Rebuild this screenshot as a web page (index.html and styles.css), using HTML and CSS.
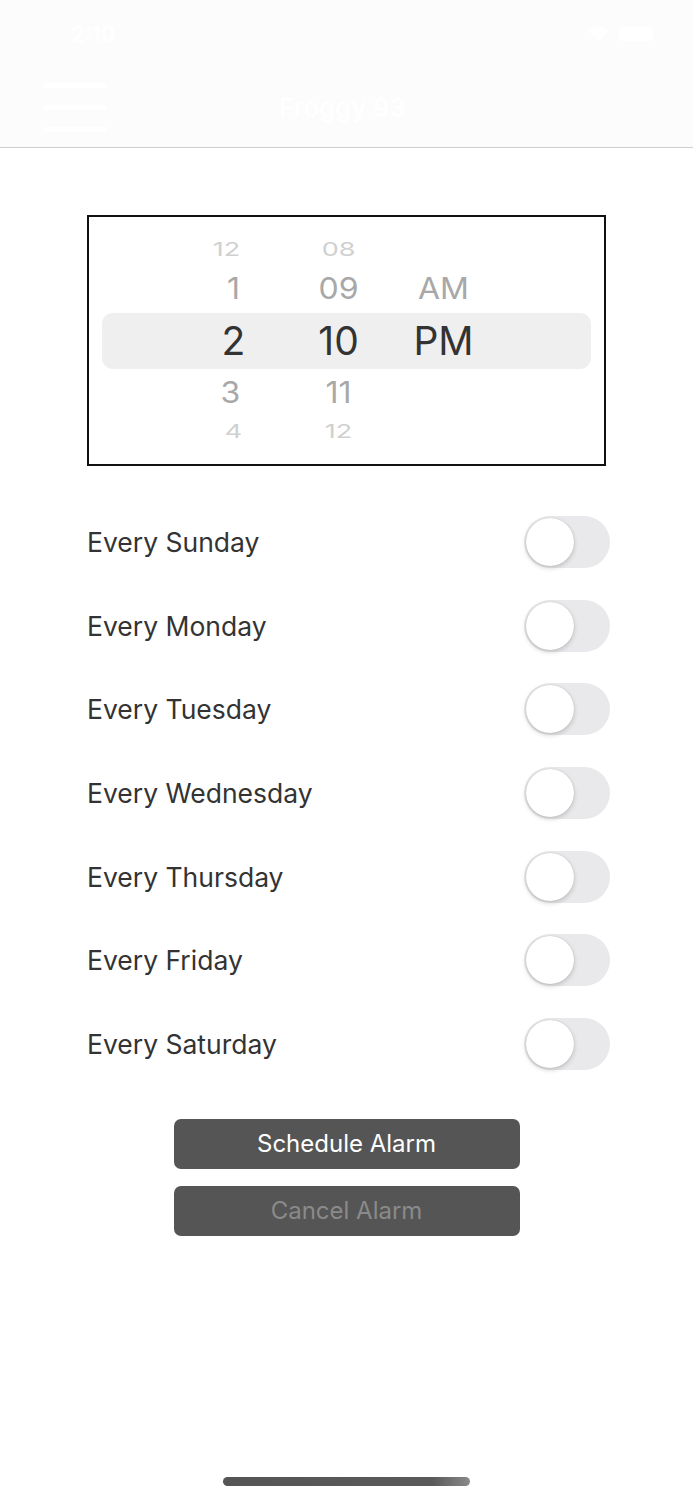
FILE: index.html
```html
<!DOCTYPE html>
<html lang="en">
<head>
  <meta charset="UTF-8" />
  <meta name="viewport" content="width=device-width, initial-scale=1.0" />
  <title>Froggy 93</title>
  <link rel="stylesheet" href="styles.css">
</head>
<body>
  <!-- Header (status bar + nav) -->
  <header class="header">
    <div class="status">
      <span class="time">2:10</span>
      <span class="status-icons">
        <svg width="24" height="16" viewBox="0 0 24 16"><path d="M12 15 L2 5 A14 14 0 0 1 22 5 Z" fill="#fff"/></svg>
        <span class="battery"></span>
      </span>
    </div>
    <div class="nav">
      <div class="burger"><span></span><span></span><span></span></div>
      <div class="title">Froggy 93</div>
    </div>
  </header>

  <main class="content">
    <!-- Time picker -->
    <div class="picker">
      <div class="band"></div>
      <div class="wheel hours">
        <span class="far top">12</span>
        <span class="near">1</span>
        <span class="sel">2</span>
        <span class="near">3</span>
        <span class="far bottom">4</span>
      </div>
      <div class="wheel minutes">
        <span class="far top">08</span>
        <span class="near">09</span>
        <span class="sel">10</span>
        <span class="near">11</span>
        <span class="far bottom">12</span>
      </div>
      <div class="wheel ampm">
        <span class="far top"></span>
        <span class="near">AM</span>
        <span class="sel">PM</span>
        <span class="near"></span>
        <span class="far bottom"></span>
      </div>
    </div>

    <!-- Repeat days -->
    <ul class="days">
      <li><span>Every Sunday</span><span class="switch"></span></li>
      <li><span>Every Monday</span><span class="switch"></span></li>
      <li><span>Every Tuesday</span><span class="switch"></span></li>
      <li><span>Every Wednesday</span><span class="switch"></span></li>
      <li><span>Every Thursday</span><span class="switch"></span></li>
      <li><span>Every Friday</span><span class="switch"></span></li>
      <li><span>Every Saturday</span><span class="switch"></span></li>
    </ul>

    <div class="actions">
      <button class="btn">Schedule Alarm</button>
      <button class="btn disabled">Cancel Alarm</button>
    </div>
  </main>

  <div class="home-bar"></div>
</body>
</html>
```

FILE: styles.css
```css
body {
  margin: 0;
  width: 693px;
  height: 1500px;
  background: #fff;
  font-family: Inter, "Noto Sans", sans-serif;
  color: #333;
  position: relative;
}
.header {
  height: 147px;
  background: #fcfcfc;
  border-bottom: 1px solid #cfcfcf;
  color: #fff;
}
.status {
  height: 68px;
  display: flex;
  justify-content: space-between;
  align-items: center;
  padding: 0 40px 0 71px;
}
.time {
  font-size: 22px;
  font-weight: 600;
}
.status-icons {
  display: flex;
  align-items: center;
  gap: 8px;
}
.battery {
  width: 34px;
  height: 14px;
  background: #fff;
  border-radius: 4px;
}
.nav {
  height: 79px;
  display: flex;
  align-items: center;
  position: relative;
}
.burger {
  margin-left: 43px;
  display: flex;
  flex-direction: column;
  gap: 17px;
}
.burger span {
  display: block;
  width: 64px;
  height: 5px;
  background: #fff;
  border-radius: 3px;
}
.title {
  margin-left: 172px;
  font-size: 26px;
  font-weight: 500;
}
.content {
  padding: 67px 87px 0;
}
.picker {
  position: relative;
  width: 519px;
  height: 251px;
  border: 2px solid #111;
  display: flex;
  padding-left: 92px;
  box-sizing: border-box;
}
.band {
  position: absolute;
  left: 13px;
  right: 13px;
  top: 96px;
  height: 56px;
  background: #efefef;
  border-radius: 11px;
}
.wheel {
  position: relative;
  display: flex;
  flex-direction: column;
  align-items: center;
  width: 105px;
  padding-top: 18px;
}
.wheel span {
  display: block;
  text-align: center;
  white-space: nowrap;
}
.far {
  height: 30px;
  line-height: 30px;
  font-size: 27px;
  color: #d0d0d0;
  transform: scaleY(0.7);
}
.near {
  height: 48px;
  line-height: 48px;
  font-size: 32px;
  color: #a8a8a8;
  transform: scaleY(0.92);
}
.sel {
  height: 56px;
  line-height: 56px;
  font-size: 39px;
  color: #333;
}
.hours .far.top { margin-left: -14px; }
.hours .near:nth-child(4) { margin-left: -6px; }
.days {
  list-style: none;
  margin: 34px 0 0;
  padding: 0;
  width: 523px;
}
.days li {
  height: 83.7px;
  display: flex;
  align-items: center;
  justify-content: space-between;
  font-size: 26.5px;
}
.switch {
  position: relative;
  width: 86px;
  height: 52px;
  border-radius: 26px;
  background: #e9e9eb;
}
.switch::after {
  content: "";
  position: absolute;
  left: 2px;
  top: 2px;
  width: 48px;
  height: 48px;
  border-radius: 50%;
  background: #fff;
  box-shadow: 0 2px 5px rgba(0, 0, 0, 0.18), 0 0 1px rgba(0, 0, 0, 0.2);
}
.actions {
  margin-top: 33px;
  display: flex;
  flex-direction: column;
  align-items: center;
  gap: 17px;
  width: 519px;
}
.btn {
  width: 346px;
  height: 50px;
  border: none;
  border-radius: 7px;
  background: #555;
  color: #fff;
  font-family: inherit;
  font-size: 24px;
}
.btn.disabled {
  color: #8a8a8a;
}
.home-bar {
  position: absolute;
  left: 223px;
  top: 1477px;
  width: 247px;
  height: 9px;
  border-radius: 5px;
  background: linear-gradient(90deg, #555 0%, #5a5a5a 85%, #8a8a8a 100%);
}
```
